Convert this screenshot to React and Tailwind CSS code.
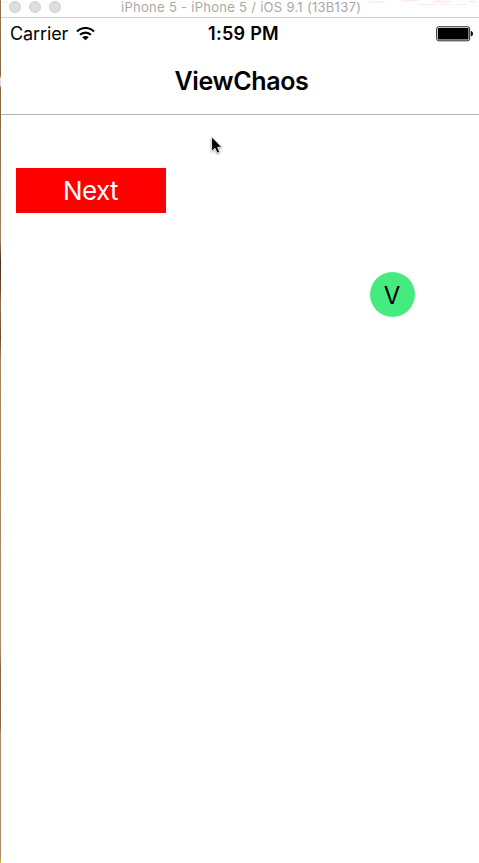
import React from "react";

function TitleBar() {
  return (
    <header className="relative flex h-[18px] items-start overflow-hidden border-b border-[#cfcfcf] pl-[8px]">
      <div className="flex gap-[8px] pt-px">
        <span className="size-3 rounded-full border border-[#d0d0d2] bg-[#dedee0]" />
        <span className="size-3 rounded-full border border-[#d0d0d2] bg-[#dedee0]" />
        <span className="size-3 rounded-full border border-[#d0d0d2] bg-[#dedee0]" />
      </div>
      <h1 className="ml-[60px] whitespace-nowrap text-[13px] leading-[15px] tracking-[0.29px] text-[#a8a8a8]">
        iPhone 5 - iPhone 5 / iOS 9.1 (13B137)
      </h1>
      <svg className="absolute left-0 top-0" width="478" height="6" fill="none">
        <path d="M1 2h6M368 2h16M401 .5h15M432 1.5h17M468 1.5h8" stroke="#fde8f2" strokeWidth="1.5" />
        <path d="M417 4.5h18M440 4.5h11M457 4.5h9" stroke="#fbe9ec" />
      </svg>
    </header>
  );
}

function WifiIcon() {
  return (
    <svg width="19" height="14" viewBox="0 0 19 14" fill="none" stroke="#000" strokeWidth="2.2">
      <path d="M1 4.6C5.7 -.2 13.3 -.2 18 4.6" />
      <path d="M4.1 7.8c3-3 7.8-3 10.8 0" />
      <path d="M9.5 13.3 6.2 10.2c1.9-1.6 4.7-1.6 6.6 0Z" fill="#000" stroke="none" />
    </svg>
  );
}

function BatteryIcon() {
  return (
    <svg width="38" height="16" viewBox="0 0 38 16">
      <rect x="0.7" y="0.8" width="33" height="14" rx="2" fill="#fff" stroke="#222" strokeWidth="1" />
      <rect x="1.9" y="2" width="30.6" height="11.6" rx="0.5" fill="#000" />
      <path d="M34.8 5.1c3 .5 3 4.9 0 5.4Z" fill="#111" />
    </svg>
  );
}

function StatusBar() {
  return (
    <div className="grid h-[30px] grid-cols-3 items-center pl-[9px] pr-[5px] pt-[2px] text-[18px] leading-[28px] text-black">
      <div className="flex items-center gap-[8px]">
        <span className="tracking-[-0.1px]">Carrier</span>
        <WifiIcon />
      </div>
      <span className="whitespace-nowrap pl-[3px] text-center font-semibold tracking-[0.3px]">1:59 PM</span>
      <div className="flex justify-end">
        <BatteryIcon />
      </div>
    </div>
  );
}

function Cursor() {
  return (
    <svg
      className="absolute left-[209px] top-[21px] drop-shadow-[0_1px_1px_rgba(0,0,0,0.35)]"
      width="16"
      height="21"
      viewBox="0 0 16 21"
    >
      <path d="M1.6.8v14.4l3.4-3 2.2 5 2.5-1.1-2.1-4.8h4.3Z" fill="#000" stroke="#fff" strokeWidth="0.8" />
    </svg>
  );
}

export default function App() {
  return (
    <div className="flex h-[863px] w-[479px] overflow-hidden bg-white font-['Inter','Liberation_Sans',sans-serif]">
      <div className="w-px shrink-0 bg-[linear-gradient(to_bottom,#93714d_0,#8f6c49_76px,#e8dfe0_78px,#dedadd_85px,#85633f_88px,#a08160_240px,#482a1d_262px,#734b31_290px,#98724d_305px,#6b472e_338px,#a6855f_360px,#aa8b68_650px,#876342_670px,#8d6b4a_728px,#aa8c69_735px,#aa8c69_858px,#d9b340_861px)]" />
      <main className="flex flex-1 flex-col">
        <TitleBar />
        <StatusBar />
        <nav className="flex h-[67px] items-center justify-center border-b border-[#b2b2b2] pl-[3px] text-[25px] font-semibold leading-[66px] tracking-[-0.35px] text-black">
          ViewChaos
        </nav>
        <section className="relative flex-1 pl-[15px] pt-[53px]">
          <button className="flex h-[45px] w-[150px] items-center justify-center bg-[#ff0000] pr-px pt-px text-[26px] font-normal leading-[44px] tracking-[-0.6px] text-white">
            Next
          </button>
          <Cursor />
          <button className="absolute left-[369px] top-[157px] flex size-[45px] items-center justify-center rounded-full bg-[#46eb80] pr-px pt-[2px] text-[24px] leading-[43px] text-black">
            V
          </button>
        </section>
      </main>
    </div>
  );
}
